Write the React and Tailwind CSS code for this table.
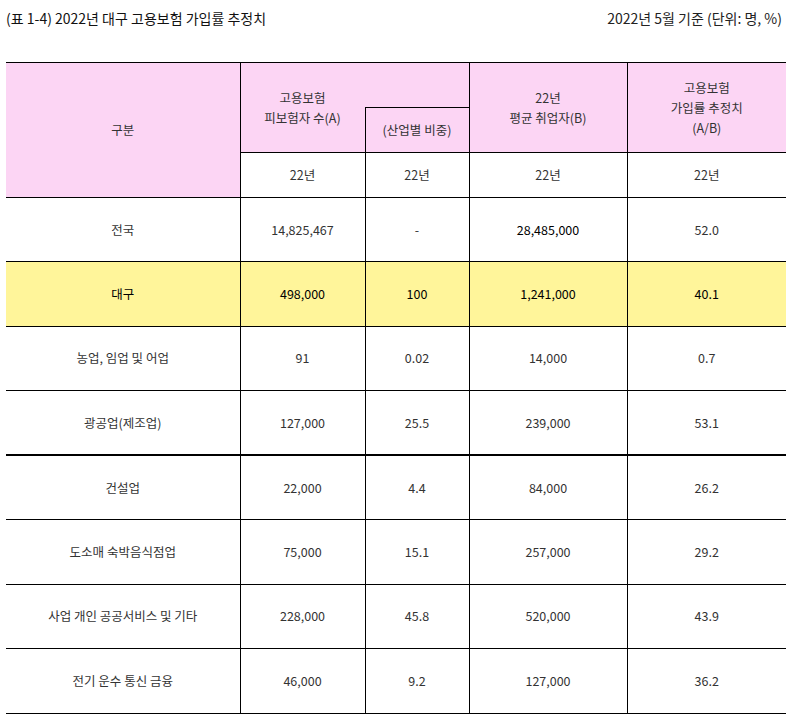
import React from "react";

const rows = [
  { name: "전국", a: "14,825,467", s: "-", b: "28,485,000", r: "52.0", boldB: true },
  { name: "대구", a: "498,000", s: "100", b: "1,241,000", r: "40.1", hl: true },
  { name: "농업, 임업 및 어업", a: "91", s: "0.02", b: "14,000", r: "0.7" },
  { name: "광공업(제조업)", a: "127,000", s: "25.5", b: "239,000", r: "53.1", thick: true },
  { name: "건설업", a: "22,000", s: "4.4", b: "84,000", r: "26.2" },
  { name: "도소매 숙박음식점업", a: "75,000", s: "15.1", b: "257,000", r: "29.2" },
  { name: "사업 개인 공공서비스 및 기타", a: "228,000", s: "45.8", b: "520,000", r: "43.9" },
  { name: "전기 운수 통신 금융", a: "46,000", s: "9.2", b: "127,000", r: "36.2" },
];

export default function App() {
  const font = { fontFamily: '"Noto Sans CJK KR", "Noto Sans", sans-serif' };
  return (
    <div className="w-[789px] h-[718px] bg-white overflow-hidden" style={font}>
      <div className="flex items-center justify-between pl-[6px] pr-[7px] h-[34px] pt-[2px]">
        <div className="text-[14px] text-[#111]">(표 1-4) 2022년 대구 고용보험 가입률 추정치</div>
        <div className="text-[14px] text-[#222]">2022년 5월 기준 (단위: 명, %)</div>
      </div>
      <table className="ml-[6px] mt-[28px] w-[780px] table-fixed border-collapse text-[12.5px] text-[#333] text-center leading-[20px]">
        <colgroup>
          <col className="w-[234px]" />
          <col className="w-[125px]" />
          <col className="w-[104px]" />
          <col className="w-[158px]" />
          <col className="w-[159px]" />
        </colgroup>
        <thead>
          <tr className="h-[45px]">
            <td rowSpan={3} className="bg-[#fcd5f4] border-t border-black border-r align-middle">구분</td>
            <td rowSpan={2} className="bg-[#fcd5f4] border-t border-black">고용보험<br />피보험자 수(A)</td>
            <td className="bg-[#fcd5f4] border-t border-b border-black"></td>
            <td rowSpan={2} className="bg-[#fcd5f4] border-t border-l border-r border-black">22년<br />평균 취업자(B)</td>
            <td rowSpan={2} className="bg-[#fcd5f4] border-t border-black">고용보험<br />가입률 추정치<br />(A/B)</td>
          </tr>
          <tr className="h-[45px]">
            <td className="bg-[#fcd5f4] border-l border-black">(산업별 비중)</td>
          </tr>
          <tr className="h-[45px]">
            <td className="border-t border-r border-black">22년</td>
            <td className="border-t border-r border-black">22년</td>
            <td className="border-t border-r border-black">22년</td>
            <td className="border-t border-black">22년</td>
          </tr>
        </thead>
        <tbody>
          {rows.map((r, i) => {
            const h = i === 0 ? "h-[64px]" : "h-[64.5px]";
            const bt = r.thick ? "border-b-2" : "border-b";
            const bg = r.hl ? "bg-[#fff59a] text-black" : "";
            return (
              <tr key={i} className={`${h} ${bg}`}>
                <td className={`border-t border-r ${bt} border-black`}>{r.name}</td>
                <td className={`border-t border-r ${bt} border-black`}>{r.a}</td>
                <td className={`border-t border-r ${bt} border-black`}>{r.s}</td>
                <td className={`border-t border-r ${bt} border-black ${r.boldB ? "text-black" : ""}`}>{r.b}</td>
                <td className={`border-t ${bt} border-black`}>{r.r}</td>
              </tr>
            );
          })}
        </tbody>
      </table>
    </div>
  );
}
